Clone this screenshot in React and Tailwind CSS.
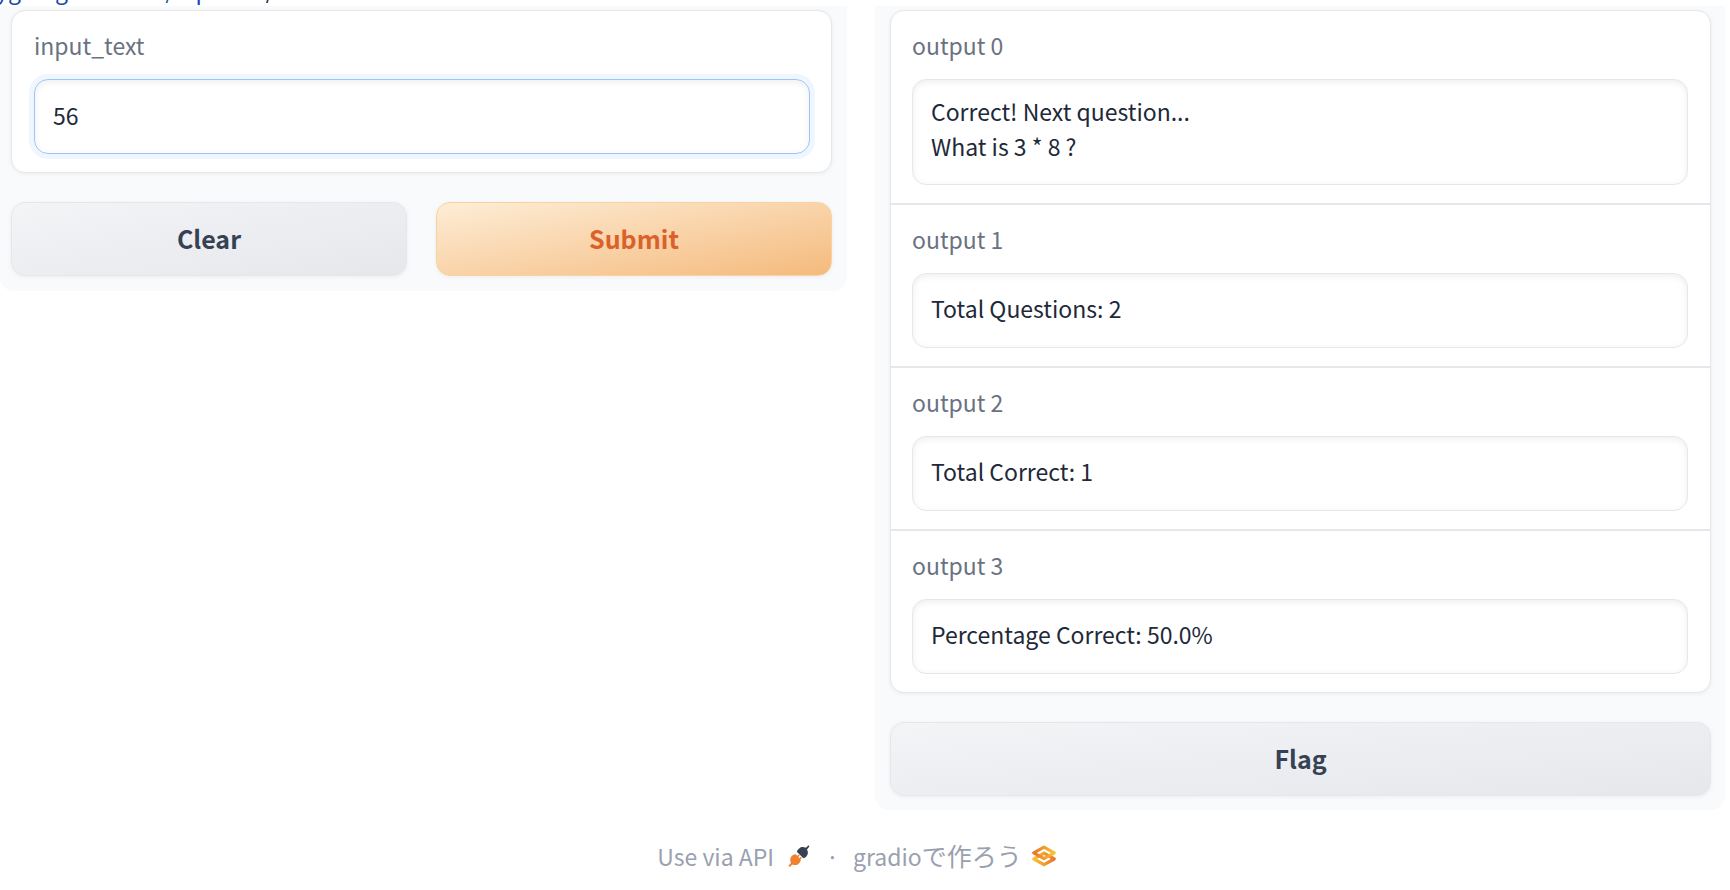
import React, { useState } from 'react';

const outputs = [
  { label: 'output 0', value: 'Correct! Next question...\nWhat is 3 * 8 ?', rows: 2 },
  { label: 'output 1', value: 'Total Questions: 2', rows: 1 },
  { label: 'output 2', value: 'Total Correct: 1', rows: 1 },
  { label: 'output 3', value: 'Percentage Correct: 50.0%', rows: 1 },
];

const labelClass = 'block text-[23px] leading-8 text-gray-500';
const cardClass = 'rounded-[14px] border border-gray-200 bg-white shadow-[0_1px_4px_rgba(0,0,0,0.06)]';
const buttonBase = 'h-[74px] flex-1 rounded-[14px] border pb-0.5 text-[25px] leading-9 font-bold shadow-[0_1px_4px_rgba(0,0,0,0.06)]';
const secondaryButton = `${buttonBase} border-gray-200 bg-linear-to-br from-gray-100 to-gray-200 text-gray-700`;
const primaryButton = `${buttonBase} border-[#f8d3a0] bg-linear-to-br from-[#fdedd6] to-[#f4ba7c] text-[#dc602a]`;

const PlugIcon = () => (
  <svg viewBox="0 0 22 22" className="size-[22px]" aria-hidden="true">
    <path d="M0.4 20.8 3 17.8C1.6 15 2 12.6 4 10.8 5 9.8 6.4 9.2 7.8 9.2L9.2 10.8 10.6 9.4 11.8 10.6 10.4 12 11.4 13.2 12.8 11.8 13.8 13 12.4 14.4 12.8 15.2C12.2 17 11.4 18.4 9.8 19.4 8 20.4 6.2 20.2 4.6 19.4L1.6 22Z" fill="#f08332" />
    <path d="M20.6 0.2 17.8 2.8C15.6 1.6 13 1.8 11.2 3.4 10 4.4 9.2 5.4 8.8 6.8L15.4 13.2C17 12.8 18.2 12 19 10.6 20.2 8.8 20.2 6.6 19 4.4L21.4 1.4Z" fill="#374151" />
  </svg>
);

const GradioLogo = () => (
  <svg viewBox="0 0 24 22" className="h-[22px] w-6" aria-hidden="true">
    <defs>
      <linearGradient id="gradioTop" x1="0" x2="1">
        <stop offset="0" stopColor="#e9762b" />
        <stop offset="1" stopColor="#f7c336" />
      </linearGradient>
      <linearGradient id="gradioBottom" x1="0" x2="1">
        <stop offset="0" stopColor="#f7c336" />
        <stop offset="1" stopColor="#e9762b" />
      </linearGradient>
    </defs>
    <g fill="none" strokeWidth="3.2" strokeLinejoin="round">
      <path d="M12 8.2 22.2 14 12 19.6 1.8 14Z" stroke="url(#gradioBottom)" />
      <path d="M12 2.2 22.2 7.8 12 13.6 1.8 7.8Z" stroke="url(#gradioTop)" />
    </g>
  </svg>
);

const App = () => {
  const [inputText, setInputText] = useState('56');

  return (
    <div className="bg-white font-['Noto_Sans_CJK_JP','Noto_Sans',sans-serif] text-gray-800">
      {/* Last line of the description, scrolled almost out of view */}
      <header className="flex h-1.5 items-end overflow-hidden">
        <p className="-ml-1 text-[23px] leading-[34px] whitespace-nowrap text-gray-800">
          <a href="#description" className="text-[#1d4aa8]">ygoing-tutorials/input</a> or /
        </p>
      </header>

      <main className="flex items-start gap-7 pr-[5px]">
        <section className="flex-1 rounded-b-[14px] bg-gray-50 pt-1 pr-[15px] pb-[15px] pl-[11px]">
          <div className={`${cardClass} pt-[18px] pr-[21px] pb-[18px] pl-[22px]`}>
            <label htmlFor="input-text" className={labelClass}>input_text</label>
            <input
              id="input-text"
              type="text"
              value={inputText}
              onChange={(e) => setInputText(e.target.value)}
              className="mt-[18px] block h-[75px] w-full rounded-[14px] border border-[#9ac5f8] px-[18px] pb-1 text-[23px] shadow-[0_0_0_5px_#eff6ff,inset_0_2px_7px_rgba(0,0,0,0.07)] outline-none"
            />
          </div>
          <div className="mt-[29px] flex gap-[29px]">
            <button type="button" className={secondaryButton} onClick={() => setInputText('')}>Clear</button>
            <button type="button" className={primaryButton}>Submit</button>
          </div>
        </section>

        <section className="flex-1 rounded-b-[14px] bg-gray-50 pt-1 pr-3.5 pb-3.5 pl-[15px]">
          <div className={`${cardClass} divide-y-2 divide-gray-200`}>
            {outputs.map((output, index) => (
              <div key={output.label} className="py-[18px] pr-[22px] pl-[21px]">
                <label htmlFor={`output-${index}`} className={labelClass}>{output.label}</label>
                <textarea
                  id={`output-${index}`}
                  rows={output.rows}
                  readOnly
                  value={output.value}
                  className={`mt-[18px] block w-full resize-none overflow-hidden rounded-[14px] border border-gray-200 px-[18px] text-[23px] leading-[35px] shadow-[inset_0_2px_7px_rgba(0,0,0,0.07)] outline-none ${output.rows > 1 ? 'pt-3.5 pb-5' : 'pt-[17px] pb-[21px]'}`}
                />
              </div>
            ))}
          </div>
          <div className="mt-[29px] flex">
            <button type="button" className={secondaryButton}>Flag</button>
          </div>
        </section>
      </main>

      <footer className="mt-[27px] flex items-center justify-center pr-[17px] text-[23px] leading-9 text-gray-400">
        <a href="#api" className="flex items-center gap-3.5">Use via API <PlugIcon /></a>
        <span className="mr-3.5 ml-4">·</span>
        <a href="#gradio" className="flex items-center gap-2.5">
          <span>gradio<span className="text-[25px]">で作ろう</span></span>
          <GradioLogo />
        </a>
      </footer>
    </div>
  );
};

export default App;
